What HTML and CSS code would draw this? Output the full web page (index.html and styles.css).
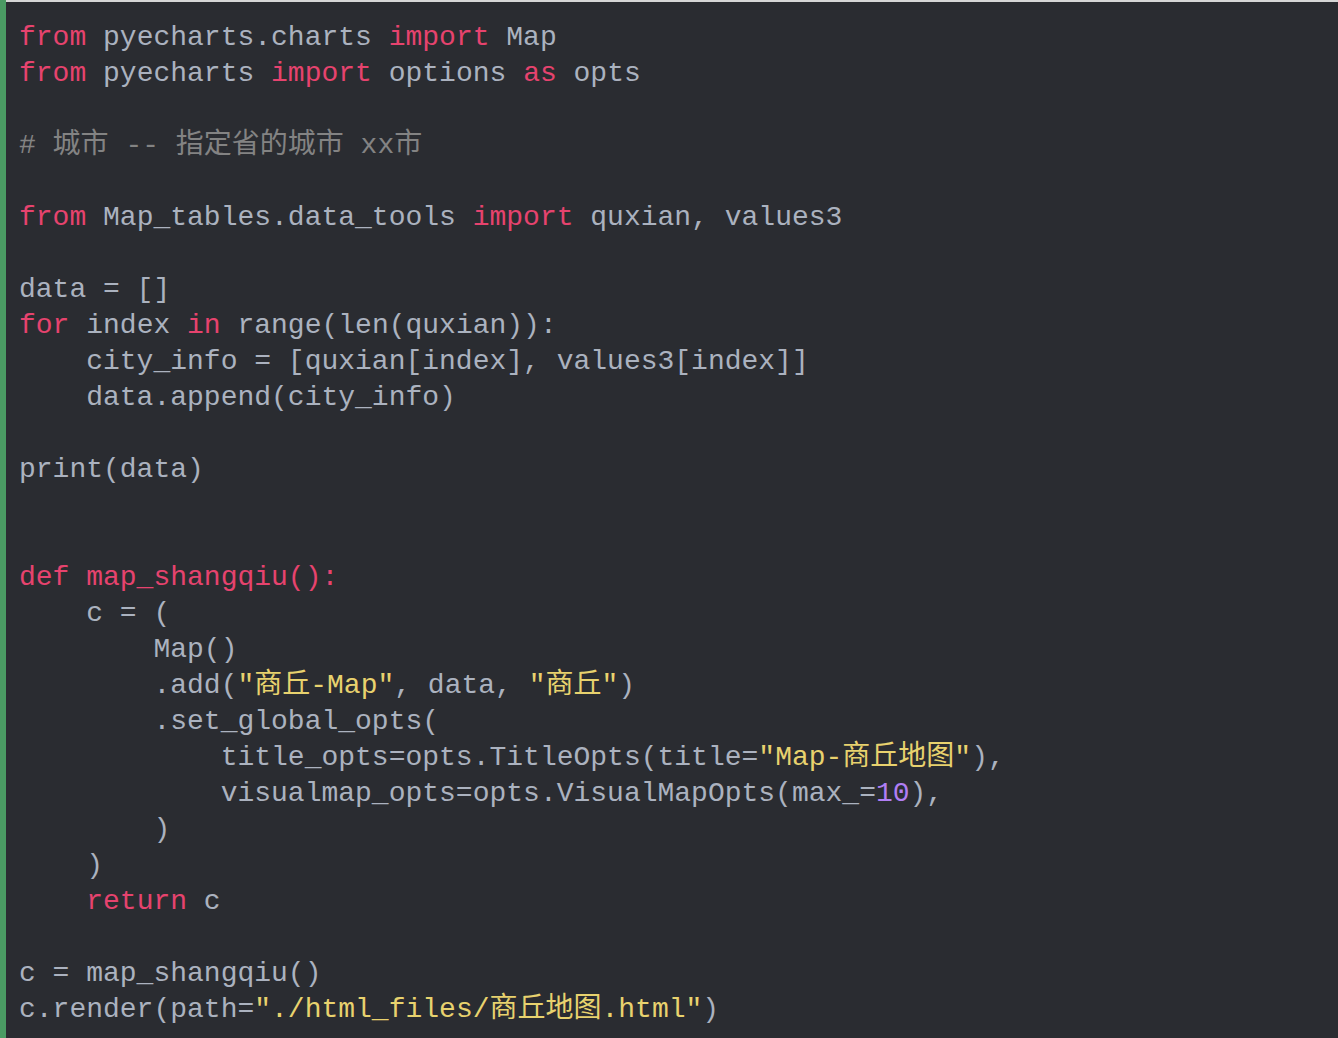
FILE: index.html
```html
<!DOCTYPE html>
<html lang="zh">
<head>
<meta charset="utf-8">
<title>code</title>
<link rel="stylesheet" href="styles.css">
</head>
<body>
<div class="block">
<pre class="code"><span class="k">from</span> pyecharts.charts <span class="k">import</span> Map
<span class="k">from</span> pyecharts <span class="k">import</span> options <span class="k">as</span> opts

<span class="c"># 城市 -- 指定省的城市 xx市</span>

<span class="k">from</span> Map_tables.data_tools <span class="k">import</span> quxian, values3

data = []
<span class="k">for</span> index <span class="k">in</span> range(len(quxian)):
    city_info = [quxian[index], values3[index]]
    data.append(city_info)

print(data)


<span class="k">def map_shangqiu():</span>
    c = (
        Map()
        .add(<span class="s">"商丘-Map"</span>, data, <span class="s">"商丘"</span>)
        .set_global_opts(
            title_opts=opts.TitleOpts(title=<span class="s">"Map-商丘地图"</span>),
            visualmap_opts=opts.VisualMapOpts(max_=<span class="n">10</span>),
        )
    )
    <span class="k">return</span> c

c = map_shangqiu()
c.render(path=<span class="s">"./html_files/商丘地图.html"</span>)</pre>
</div>
</body>
</html>
```

FILE: styles.css
```css
html, body {
  margin: 0;
  padding: 0;
  background: #2a2c31;
}

.block {
  min-height: 1038px;
  box-sizing: border-box;
  border-left: 6px solid #4a9b63;
  background: #2a2c31;
  border-top-right-radius: 6px;
}

.block::before {
  content: "";
  display: block;
  height: 2px;
  background: #d6d6d6;
}

.code {
  margin: 0;
  padding: 18px 0 0 13px;
  font-family: "Liberation Mono", "Noto Sans CJK SC", monospace;
  font-size: 28px;
  line-height: 36px;
  color: #abb2bf;
  white-space: pre;
}

.k { color: #e6436e; }
.c { color: #838383; }
.s { color: #e8d26e; }
.n { color: #b07ef4; }
```
